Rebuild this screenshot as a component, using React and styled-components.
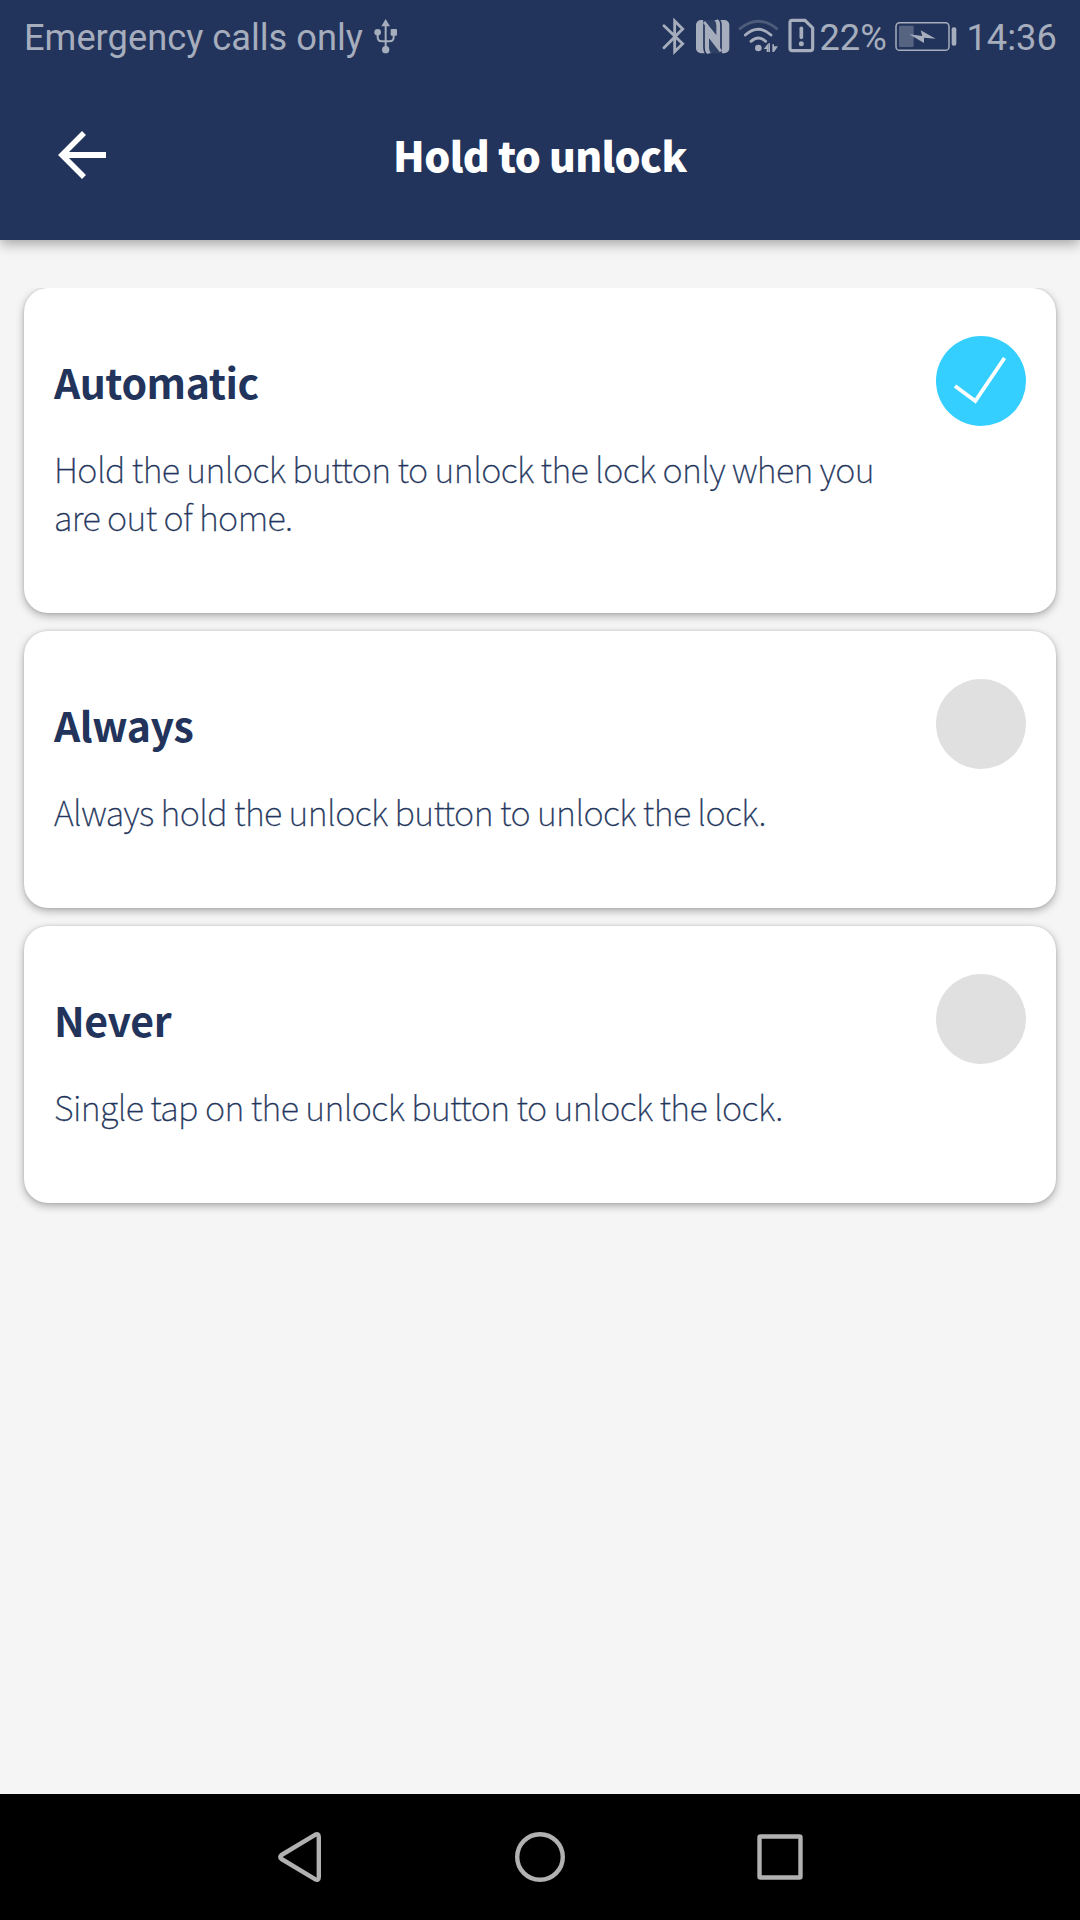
import React, { useState } from "react";
import styled, { createGlobalStyle } from "styled-components";

const navy = "#22345b";
const muted = "#a6adbd";
const sans = `"Noto Sans CJK SC", "Noto Sans", sans-serif`;

const GlobalStyle = createGlobalStyle`
  *, *::before, *::after { box-sizing: border-box; }
  body { margin: 0; background: #f5f5f5; }
`;

const Screen = styled.div`
  display: flex;
  flex-direction: column;
  width: 1080px;
  height: 1920px;
  background: #f5f5f5;
  overflow: hidden;
`;

const TopArea = styled.div`
  position: relative;
  flex: none;
  background: ${navy};
  box-shadow: 0 4px 12px rgba(0, 0, 0, 0.33);
`;

const StatusBar = styled.div`
  display: flex;
  align-items: flex-start;
  height: 72px;
  padding-left: 24px;
  color: ${muted};
`;

const StatusText = styled.span`
  flex: none;
  width: ${(p) => p.$width}px;
  margin-top: 16px;
  margin-left: ${(p) => p.$before || 0}px;
  font: 400 36.25px/44px Roboto, sans-serif;
  white-space: nowrap;
`;

const StatusIcon = styled.svg`
  display: block;
  flex: none;
  width: ${(p) => p.$width}px;
  height: 80px;
  margin-left: ${(p) => p.$before || 0}px;
`;

const Header = styled.header`
  display: grid;
  grid-template-columns: 168px 1fr 168px;
  align-items: center;
  height: 168px;
`;

const BackButton = styled.button`
  display: flex;
  justify-content: center;
  padding: 0;
  border: 0;
  background: none;
  margin: 0 4px 2px 0;
`;

const HeaderTitle = styled.h1`
  margin: 0 0 5px;
  font: 900 41px/60px ${sans};
  letter-spacing: -0.6px;
  color: #fff;
  text-align: center;
`;

const Content = styled.main`
  flex: 1;
  margin-top: 48px;
  padding: 0 24px;
  overflow: hidden;
  display: flex;
  flex-direction: column;
  gap: 18px;
`;

const Card = styled.section`
  display: grid;
  grid-template-columns: 1fr 90px;
  column-gap: 36px;
  align-items: start;
  flex: none;
  height: ${(p) => (p.$tall ? 325 : 277)}px;
  padding: 48px 30px;
  border-radius: 24px;
  background: #fff;
  box-shadow: 0 3px 8px rgba(0, 0, 0, 0.3), 0 0 3px rgba(0, 0, 0, 0.12);
`;

const CardText = styled.div`
  padding-top: 15px;
  color: ${navy};
`;

const CardTitle = styled.h2`
  margin: 0;
  font: 700 41px/60px ${sans};
  letter-spacing: -0.45px;
`;

const CardDescription = styled.p`
  width: 830px;
  margin: 33px 0 0;
  font: 100 34.3px/48px ${sans};
  letter-spacing: -0.58px;
  -webkit-text-stroke: 0.4px ${navy};
  white-space: pre;
`;

const Radio = styled.button`
  width: 90px;
  height: 90px;
  padding: 0;
  border: 0;
  border-radius: 50%;
  background: ${(p) => (p.$on ? "#35cfff" : "#e0e0e0")};
`;

const NavBar = styled.nav`
  display: flex;
  justify-content: center;
  align-items: center;
  gap: 180px;
  flex: none;
  height: 126px;
  background: #000;
`;

const NavIcon = styled.svg`
  width: 60px;
  height: 60px;
  fill: none;
  stroke: #b1b1b1;
  stroke-width: 4.4;
  stroke-linejoin: round;
`;

const options = [
  {
    title: "Automatic",
    text: "Hold the unlock button to unlock the lock only when you\nare out of home.",
    tall: true,
  },
  { title: "Always", text: "Always hold the unlock button to unlock the lock." },
  { title: "Never", text: "Single tap on the unlock button to unlock the lock." },
];

function UsbIcon() {
  return (
    <StatusIcon $width={24} $before={0} viewBox="1122 0 72 240">
      <g fill="none" stroke={muted} strokeWidth="6">
        <path d="M1157 75V145M1133 98V112Q1133 124 1145 124H1169Q1181 124 1181 112V98" />
      </g>
      <g fill={muted}>
        <path d="M1157 57L1170 79H1144Z" />
        <circle cx="1133" cy="97" r="10" />
        <rect x="1172" y="87" width="19" height="20" rx="3" />
        <circle cx="1157" cy="149" r="11" />
      </g>
    </StatusIcon>
  );
}

function BluetoothIcon() {
  return (
    <StatusIcon $width={24} $before={264} viewBox="36 0 72 240">
      <path
        d="M42 77L98 131L74 155V63L98 87L42 143"
        fill="none"
        stroke={muted}
        strokeWidth="8.5"
        strokeLinecap="round"
      />
    </StatusIcon>
  );
}

function NfcIcon() {
  return (
    <StatusIcon $width={34} $before={10} viewBox="138 0 102 240">
      <rect x="138" y="60" width="100" height="100" rx="15" fill={muted} />
      <path d="M162 60V144Q162 154 168 162M213 160V76Q213 66 207 58" fill="none" stroke={navy} strokeWidth="5" />
      <path d="M162 60L199 106V76Q199 66 192 58H159ZM214 160L177 114V144Q177 154 184 162H214Z" fill={navy} opacity="0.9" />
      <path d="M162 66L206 122V76Q206 66 200 60M213 154L170 98V144Q170 154 176 160" fill="none" stroke={muted} strokeWidth="8" />
    </StatusIcon>
  );
}

function WifiIcon() {
  return (
    <StatusIcon $width={40} $before={8} viewBox="264 0 120 240">
      <g fill="none" stroke={muted} strokeWidth="8.5" strokeLinecap="round">
        <path d="M270 86Q325 41 380 86" opacity="0.32" />
        <path d="M286 105Q325 71 363 105" />
        <path d="M303 124Q325 104 347 124" />
      </g>
      <circle cx="325" cy="144" r="10" fill={muted} />
      <path fill={muted} d="M341 147L355 130V156H350V147ZM367 133V156H372L384 139H372V133Z" />
      <path fill={muted} d="M355 130H360V156H355Z" />
    </StatusIcon>
  );
}

function SimAlertIcon() {
  return (
    <StatusIcon $width={27} $before={9.5} viewBox="413 0 81 240">
      <path
        d="M425 61H464L487 84V145Q487 152 480 152H426Q419 152 419 145V68Q419 61 425 61Z"
        fill="none"
        stroke={muted}
        strokeWidth="9.5"
      />
      <path d="M453 85V112" stroke={muted} strokeWidth="11" strokeLinecap="round" />
      <circle cx="453" cy="131" r="7.5" fill={muted} />
    </StatusIcon>
  );
}

function BatteryIcon() {
  return (
    <StatusIcon $width={62} $before={5.5} viewBox="106 0 186 240">
      <rect x="109" y="68" width="159" height="83" rx="11" fill="none" stroke={muted} strokeWidth="4.5" />
      <rect x="118" y="77" width="44" height="64" rx="4" fill={muted} opacity="0.4" />
      <path d="M149 103L188 108L183 91L228 116L193 113V129Z" fill={muted} />
      <rect x="276" y="82" width="14" height="55" rx="6" fill={muted} />
    </StatusIcon>
  );
}

export default function App() {
  const [selected, setSelected] = useState(0);
  return (
    <>
      <GlobalStyle />
      <Screen>
        <TopArea>
          <StatusBar>
            <StatusText $width={350}>Emergency calls only</StatusText>
            <UsbIcon />
            <BluetoothIcon />
            <NfcIcon />
            <WifiIcon />
            <SimAlertIcon />
            <StatusText $width={70} $before={5}>22%</StatusText>
            <BatteryIcon />
            <StatusText $width={90} $before={9.5}>14:36</StatusText>
          </StatusBar>
          <Header>
            <BackButton aria-label="Back">
              <svg width="48" height="48" viewBox="0 0 48 48" fill="none" stroke="#fff">
                <path d="M48 24H6" strokeWidth="6" />
                <path d="M26 2L4 24L26 46" strokeWidth="5.6" />
              </svg>
            </BackButton>
            <HeaderTitle>Hold to unlock</HeaderTitle>
          </Header>
        </TopArea>
        <Content>
          {options.map((option, i) => (
            <Card key={option.title} $tall={option.tall}>
              <CardText>
                <CardTitle>{option.title}</CardTitle>
                <CardDescription>{option.text}</CardDescription>
              </CardText>
              <Radio $on={i === selected} aria-label={option.title} onClick={() => setSelected(i)}>
                {i === selected && (
                  <svg width="90" height="90" viewBox="0 0 90 90" fill="none">
                    <path d="M19 50L39.3 65L68.5 22" stroke="#fff" strokeWidth="3.8" />
                  </svg>
                )}
              </Radio>
            </Card>
          ))}
        </Content>
        <NavBar>
          <NavIcon viewBox="270 1827 60 60">
            <path d="M315 1834.8L281.5 1855Q279 1857 281.5 1859L315 1879.2Q318.8 1881 318.8 1877V1837Q318.8 1833 315 1834.8Z" />
          </NavIcon>
          <NavIcon viewBox="510 1827 60 60">
            <circle cx="540" cy="1857" r="22.8" />
          </NavIcon>
          <NavIcon viewBox="750 1827 60 60">
            <rect x="759.5" y="1836.5" width="41" height="41" rx="1" />
          </NavIcon>
        </NavBar>
      </Screen>
    </>
  );
}
